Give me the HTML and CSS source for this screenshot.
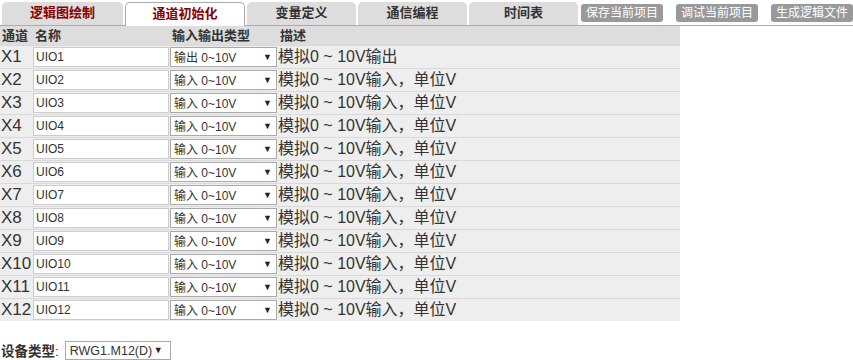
FILE: index.html
```html
<!DOCTYPE html>
<html lang="zh-CN">
    <head>
        <meta charset="UTF-8" />
        <title>通道初始化</title>
        <link rel="stylesheet" href="styles.css">
    </head>
    <body>
        <div class="tabbar">
            <div class="tab tab-red">逻辑图绘制</div>
            <div class="tab tab-red active">通道初始化</div>
            <div class="tab">变量定义</div>
            <div class="tab">通信编程</div>
            <div class="tab">时间表</div>
            <div class="actions">
                <button>保存当前项目</button>
                <button>调试当前项目</button>
                <button>生成逻辑文件</button>
            </div>
        </div>
        <table class="channels">
            <thead>
                <tr>
                    <th class="c-ch">通道</th>
                    <th class="c-name">名称</th>
                    <th class="c-type">输入输出类型</th>
                    <th>描述</th>
                </tr>
            </thead>
            <tbody id="rows"></tbody>
        </table>
        <div class="device">
            <span class="label"><b>设备类型</b>:</span>
            <span class="sel small"><select><option>RWG1.M12(D)</option></select></span>
        </div>
        <script>
            const rows = [];
            for (let i = 1; i <= 12; i++) {
                const out = i === 1;
                rows.push(`<tr>
                    <td class="ch">X${i}</td>
                    <td><input class="name" value="UIO${i}" /></td>
                    <td><span class="sel"><select><option>${out ? "输出" : "输入"} 0~10V</option></select></span></td>
                    <td class="desc">${out ? "模拟0 ~ 10V输出" : "模拟0 ~ 10V输入，单位V"}</td>
                </tr>`);
            }
            document.querySelector("#rows").innerHTML = rows.join("");
        </script>
    </body>
</html>
```

FILE: styles.css
```css
* {
    box-sizing: border-box;
    margin: 0;
    padding: 0;
    font-family: "Liberation Sans", "Noto Sans CJK SC", sans-serif;
    color: #333;
}
body {
    background: #fff;
}
.tabbar {
    display: flex;
    align-items: flex-end;
    gap: 2px;
    height: 26px;
    padding: 2px 0 0 2px;
    border-bottom: 1px solid #aaa;
}
.tab {
    width: 109px;
    height: 23px;
    background: #ddd;
    border-radius: 5px 5px 0 0;
    font-size: 13px;
    font-weight: bold;
    text-align: center;
    line-height: 22px;
}
.tab:first-child {
    width: 121px;
}
.tab-red {
    color: #8b0000;
}
.tab.active {
    width: 120px;
    height: 24px;
    margin-bottom: -1px;
    background: #fff;
    border: 1px solid #aaa;
    border-bottom: none;
}
.actions {
    display: flex;
    gap: 13px;
    margin-left: 1px;
    align-self: flex-start;
    padding-top: 2px;
}
button {
    all: unset;
    width: 82px;
    height: 18px;
    background: #999;
    color: #fff;
    font-size: 12px;
    text-align: center;
    line-height: 18px;
    border-radius: 3px;
}
.channels {
    width: 680px;
    border-collapse: collapse;
}
.channels th {
    height: 19px;
    line-height: 17px;
    background: #ddd;
    font-size: 13px;
    font-weight: bold;
    text-align: left;
    padding: 0 0 0 2px;
}
.c-ch {
    width: 33px;
}
.c-name {
    width: 137px;
}
.c-type {
    width: 108px;
}
.channels td {
    height: 23px;
    line-height: 20px;
    background: #eee;
    border-top: 1px solid #d9d9d9;
    padding: 0;
    vertical-align: middle;
}
.ch {
    font-size: 17px;
    padding-left: 1px !important;
}
.desc {
    font-size: 16px;
    white-space: nowrap;
}
.name {
    display: block;
    width: 136px;
    height: 20px;
    border: 1px solid #ccc;
    background: #fff;
    font-size: 12px;
    padding-left: 2px;
    outline: none;
}
.sel {
    position: relative;
    display: block;
    width: 107px;
}
.sel select {
    appearance: none;
    display: block;
    width: 100%;
    height: 20px;
    border: 1px solid #aaa;
    background: #fff;
    font-size: 12px;
    line-height: 16px;
    padding: 2px 0 0 3px;
}
.sel::after {
    content: "\25BC";
    position: absolute;
    right: 5px;
    top: 0;
    line-height: 20px;
    font-size: 9px;
    color: #222;
    pointer-events: none;
}
.device {
    display: flex;
    align-items: center;
    gap: 6px;
    margin-top: 19px;
    padding-left: 1px;
    font-size: 13.5px;
}
.device b {
    font-weight: bold;
}
.sel.small {
    width: 106px;
}
.sel.small select {
    height: 19px;
    font-size: 12.5px;
    padding: 1px 0 0 4px;
}
.sel.small::after {
    right: 8px;
    line-height: 19px;
}
```
